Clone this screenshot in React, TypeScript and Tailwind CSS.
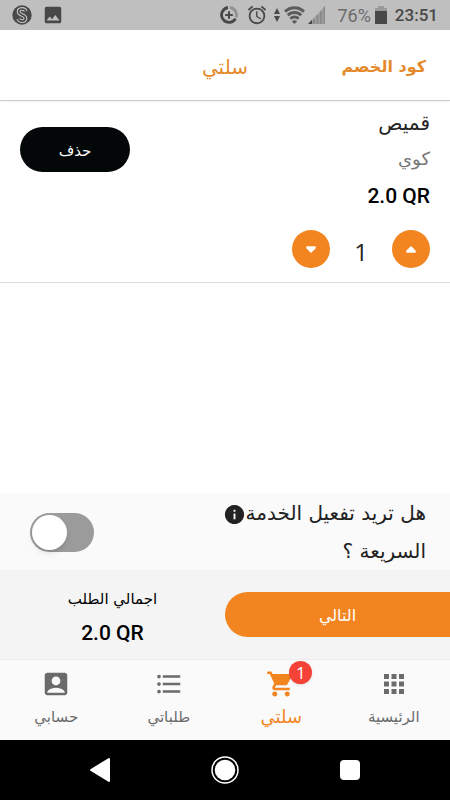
import { useState } from "react";
import {
    MdAccountBox,
    MdAlarm,
    MdApps,
    MdFormatListBulleted,
    MdImage,
    MdInfo,
    MdShoppingCart,
} from "react-icons/md";

function StatusBar() {
    return (
        <div dir="ltr" className="flex h-[30px] items-center justify-between bg-[#bfbfbf] px-3 font-[Roboto,sans-serif] text-[#484848]">
            <div className="flex items-center gap-[10px]">
                <svg className="size-5" viewBox="0 0 20 20" fill="none">
                    <circle cx="10" cy="10" r="9.7" fill="#484848" />
                    <path d="M13.6 6.2C12.6 3 6.6 3.2 6.6 6.8c0 3.6 6.8 2.8 6.8 6.4 0 3.8-6 3.8-7 .6" stroke="#c4c4c4" strokeWidth="3.8" />
                    <path d="M13.6 6.2C12.6 3 6.6 3.2 6.6 6.8c0 3.6 6.8 2.8 6.8 6.4 0 3.8-6 3.8-7 .6" stroke="#484848" strokeWidth="1.6" />
                </svg>
                <MdImage className="size-[22px]" />
            </div>
            <div className="flex items-center">
                <svg className="mr-2 size-[18px]" viewBox="0 0 18 18" fill="none" strokeWidth="2.8">
                    <path d="M8 1.5A7.5 7.5 0 1 0 15.5 12.8" stroke="#484848" />
                    <path d="M10 1.5A7.5 7.5 0 0 1 16 11.5" stroke="#929292" />
                    <path d="M9 5.2v7.6M5.2 9h7.6" stroke="#484848" strokeWidth="2" />
                </svg>
                <MdAlarm className="mr-[6px] size-[22px]" />
                <svg className="mr-1 h-4 w-[6px]" viewBox="0 0 6 16" fill="#484848">
                    <path d="M3 1l3 6H0zM3 15l3-6H0z" />
                </svg>
                <svg className="mr-[3px] h-[18px] w-[21px]" viewBox="0 0 21 18" fill="none" stroke="#5c5c5c" strokeWidth="3">
                    <path d="M1 5.6a13.4 13.4 0 0 1 19 0" />
                    <path d="M3.8 9.2a9.5 9.5 0 0 1 13.4 0" />
                    <path d="M6.400 12.700a5.800 5.800 0 0 1 8.200 0" />
                    <path d="M7.800 15.200q2.700-1.800 5.400 0L10.500 18z" fill="#5c5c5c" stroke="none" />
                </svg>
                <svg className="mr-3 h-[18px] w-[17px]" viewBox="0 0 17 18">
                    <path d="M17 0v18H0z" fill="#a0a0a0" />
                    <path d="M5 12.7h2V18H5zM8.5 9h2v9h-2zM12 5.3h2V18h-2zM15.5 1.6L17 0v18h-1.500z" fill="#8a8a8a" />
                    <path d="M4 13.800V18H0z" fill="#484848" />
                </svg>
                <span className="mr-1 text-[18px] text-[#6b6b6b]">76%</span>
                <svg className="mr-2 h-[18px] w-3" viewBox="0 0 12 18">
                    <path d="M3 0h6v2h3v4H0V2h3z" fill="#999" />
                    <path d="M0 5h12v13H0z" fill="#484848" />
                </svg>
                <span className="text-[17px] font-medium leading-7">23:51</span>
            </div>
        </div>
    )
}

function CartItem() {
    const [count, setCount] = useState(1)
    const stepper = "flex size-[38px] items-center justify-center rounded-full bg-[#f28520] text-white"

    return (
        <section className="flex items-start justify-between border-b border-[#dcdcdc] px-5 pb-[14px] pt-1">
            <div>
                <h2 className="text-[20px] leading-9 text-[#222]">قميص</h2>
                <p className="text-[18px] leading-9 text-[#777]">كوي</p>
                <p dir="ltr" className="text-right font-[Roboto,sans-serif] text-[21px] font-medium leading-[38px] text-black">2.0 QR</p>
                <div className="mt-[15px] flex items-center">
                    <button aria-label="زيادة" onClick={() => setCount(count + 1)} className={stepper}>
                        <svg className="h-[7px] w-[10px]" viewBox="0 0 10 7" fill="currentColor" stroke="currentColor" strokeWidth="1.5" strokeLinejoin="round">
                            <path d="M5 1l4 4v1H1V5z" />
                        </svg>
                    </button>
                    <span className="h-[38px] w-[62px] pt-1 text-center font-[Open_Sans,sans-serif] text-[24px] leading-9 text-[#222]">{count}</span>
                    <button aria-label="إنقاص" onClick={() => setCount(Math.max(1, count - 1))} className={stepper}>
                        <svg className="h-[7px] w-[10px]" viewBox="0 0 10 7" fill="currentColor" stroke="currentColor" strokeWidth="1.5" strokeLinejoin="round">
                            <path d="M5 6l4-4V1H1v1z" />
                        </svg>
                    </button>
                </div>
            </div>
            <button className="mt-[22px] h-[45px] w-[110px] rounded-full bg-[#030708] pt-1 text-[15px] text-white">حذف</button>
        </section>
    )
}

function BottomNav() {
    const item = "flex flex-1 flex-col items-center pt-[9px]"

    return (
        <nav className="flex h-[81px] border-t border-[#ececec] bg-[#fafafa] leading-9 text-[#6b6b6b]">
            <a href="#home" className={`${item} text-[15px]`}>
                <MdApps className="size-[30px]" />
                الرئيسية
            </a>
            <a href="#cart" className={`${item} text-[18px] text-[#f28520]`}>
                <span className="relative">
                    <MdShoppingCart className="size-[30px]" />
                    <span className="absolute -right-4 -top-2 flex size-[23px] items-center justify-center rounded-full bg-[#f44336] font-[Open_Sans,sans-serif] text-[17px] text-white shadow">1</span>
                </span>
                سلتي
            </a>
            <a href="#orders" className={`${item} text-[15px]`}>
                <MdFormatListBulleted className="size-[30px]" />
                طلباتي
            </a>
            <a href="#account" className={`${item} text-[15px]`}>
                <MdAccountBox className="size-[30px]" />
                حسابي
            </a>
        </nav>
    )
}

function App() {
    const [express, setExpress] = useState(false)

    return (
        <div dir="rtl" className="flex min-h-screen flex-col bg-white font-[DejaVu_Sans,sans-serif]">
            <StatusBar />

            <header className="grid h-[71px] grid-cols-3 items-center border-b border-[#cbcbcb] px-6 pt-[3px] text-[#e58a2b] shadow-xs">
                <a href="#code" className="text-[16px] font-bold">كود الخصم</a>
                <h1 className="text-center text-[20px]">سلتي</h1>
            </header>

            <main className="flex-1">
                <CartItem />
            </main>

            <div className="flex items-center justify-between bg-[#fafafa] pl-[30px] pr-6">
                <label htmlFor="express" className="w-[220px] text-[20px] leading-[38px] text-[#222]">
                    هل تريد تفعيل الخدمة<MdInfo className="inline size-[23px]" /> السريعة ؟
                </label>
                <input
                    id="express"
                    type="checkbox"
                    role="switch"
                    checked={express}
                    onChange={e => setExpress(e.target.checked)}
                    className="h-[39px] w-16 appearance-none rounded-full bg-[#9b9b9b] p-[2px] before:mr-auto before:block before:size-[35px] before:rounded-full before:bg-white before:shadow-md checked:bg-[#f28520] checked:before:mr-0"
                />
            </div>

            <div className="flex h-[89px] items-center bg-[#f4f4f4]">
                <button className="h-[45px] w-1/2 rounded-l-full bg-[#f28520] pt-[2px] text-[16px] text-white">التالي</button>
                <div className="w-1/2 pt-1 text-center text-black">
                    <p className="text-[15px] leading-8">اجمالي الطلب</p>
                    <p dir="ltr" className="font-[Roboto,sans-serif] text-[21px] font-medium leading-9">2.0 QR</p>
                </div>
            </div>

            <BottomNav />

            <div dir="ltr" className="flex h-[60px] items-center justify-center gap-[101px] bg-black">
                <button aria-label="رجوع">
                    <svg className="h-6 w-5" viewBox="0 0 20 24" fill="#fff" stroke="#fff" strokeWidth="2" strokeLinejoin="round">
                        <path d="M19 1v22L1 12z" />
                    </svg>
                </button>
                <button aria-label="الشاشة الرئيسية">
                    <svg className="size-7" viewBox="0 0 28 28" fill="none">
                        <circle cx="14" cy="14" r="13" stroke="#fff" strokeWidth="1.5" />
                        <circle cx="14" cy="14" r="10.3" fill="#fff" />
                    </svg>
                </button>
                <button aria-label="التطبيقات الأخيرة" className="size-5 rounded-sm bg-white" />
            </div>
        </div>
    )
}

export default App
